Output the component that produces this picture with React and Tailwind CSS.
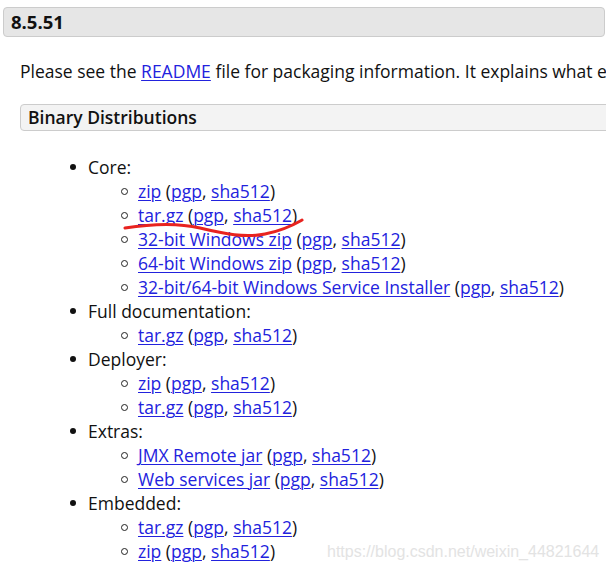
import React from 'react';

const link = 'text-[#2222dd] underline underline-offset-[2px] decoration-[1px]';

const Sums = () => (
  <>
    {' ('}
    <a className={link}>pgp</a>
    {', '}
    <a className={link}>sha512</a>
    {')'}
  </>
);

const Sub = ({ name }) => (
  <div className="flex items-center h-[24px]">
    <span className="w-[7px] h-[7px] rounded-full border-[1.5px] border-[#222] ml-[121px] mr-[10px]" />
    <span>
      <a className={link}>{name}</a>
      <Sums />
    </span>
  </div>
);

const Group = ({ title, items }) => (
  <>
    <div className="flex items-center h-[24px]">
      <span className="w-[6px] h-[6px] rounded-full bg-[#111] ml-[70px] mr-[12px]" />
      <span>{title}</span>
    </div>
    {items.map((it) => (
      <Sub key={it} name={it} />
    ))}
  </>
);

const groups = [
  { title: 'Core:', items: ['zip', 'tar.gz', '32-bit Windows zip', '64-bit Windows zip', '32-bit/64-bit Windows Service Installer'] },
  { title: 'Full documentation:', items: ['tar.gz'] },
  { title: 'Deployer:', items: ['zip', 'tar.gz'] },
  { title: 'Extras:', items: ['JMX Remote jar', 'Web services jar'] },
  { title: 'Embedded:', items: ['tar.gz', 'zip'] },
];

export default function App() {
  return (
    <div
      className="relative w-[606px] h-[567px] overflow-hidden bg-white text-[#111] text-[17.5px]"
      style={{ fontFamily: '"Open Sans", "Noto Sans", sans-serif' }}
    >
      <div className="w-[900px]">
        <div className="ml-[3px] mt-[7px] h-[30px] w-[602px] bg-[#e6e6e6] border border-[#cccccc] rounded-[4px] flex items-center pl-[7px] text-[18.5px] font-bold">
          8.5.51
        </div>
        <p className="ml-[20px] mt-[21px] h-[26px] leading-[26px] whitespace-nowrap">
          Please see the <a className={link}>README</a> file for packaging information. It explains what every distribution contains.
        </p>
        <div className="ml-[20px] mt-[20px] h-[27px] w-[620px] bg-[#f3f3f3] border border-[#cccccc] rounded-[4px] flex items-center pl-[7px] font-semibold">
          Binary Distributions
        </div>
        <div className="mt-[24px] whitespace-nowrap">
          {groups.map((g) => (
            <Group key={g.title} title={g.title} items={g.items} />
          ))}
        </div>
      </div>

      <svg className="absolute left-0 top-0 pointer-events-none" width="606" height="567">
        <path
          d="M125 228 C 150 224, 175 222, 200 228 S 245 238, 265 234 S 295 224, 302 220"
          fill="none"
          stroke="#e8231f"
          strokeWidth="3"
          strokeLinecap="round"
        />
      </svg>

      <div
        className="absolute left-[327px] top-[540px] text-[16px] text-[#e3e3e3] whitespace-nowrap"
        style={{ fontFamily: '"Liberation Sans", Arial, sans-serif' }}
      >
        https://blog.csdn.net/weixin_44821644
      </div>
    </div>
  );
}
